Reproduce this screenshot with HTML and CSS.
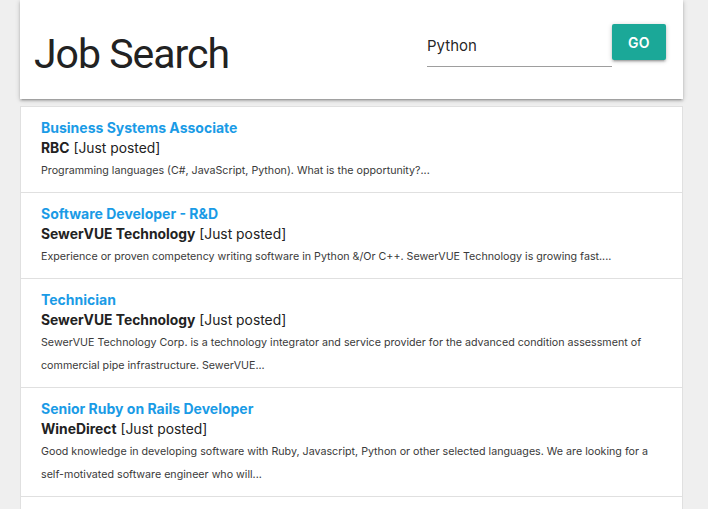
FILE: index.html
```html
<!DOCTYPE html>
<html>
<head>
<meta charset="utf-8">
<link rel="stylesheet" href="styles.css">
</head>
<body>
<div class="page">
  <header class="card header">
    <h1 class="title">Job Search</h1>
    <form class="search">
      <input class="search-input" type="text" value="Python">
      <button class="btn" type="button">GO</button>
    </form>
  </header>
  <ul class="collection">
    <li class="item">
      <a class="job-title">Business Systems Associate</a>
      <div class="company"><b>RBC</b> [Just posted]</div>
      <p class="desc">Programming languages (C#, JavaScript, Python). What is the opportunity?...</p>
    </li>
    <li class="item">
      <a class="job-title">Software Developer - R&amp;D</a>
      <div class="company"><b>SewerVUE Technology</b> [Just posted]</div>
      <p class="desc">Experience or proven competency writing software in Python &amp;/Or C++. SewerVUE Technology is growing fast....</p>
    </li>
    <li class="item">
      <a class="job-title">Technician</a>
      <div class="company"><b>SewerVUE Technology</b> [Just posted]</div>
      <p class="desc">SewerVUE Technology Corp. is a technology integrator and service provider for the advanced condition assessment of commercial pipe infrastructure. SewerVUE...</p>
    </li>
    <li class="item">
      <a class="job-title">Senior Ruby on Rails Developer</a>
      <div class="company"><b>WineDirect</b> [Just posted]</div>
      <p class="desc">Good knowledge in developing software with Ruby, Javascript, Python or other selected languages. We are looking for a self-motivated software engineer who will...</p>
    </li>
  </ul>
</div>
</body>
</html>
```
FILE: styles.css
```css
* { box-sizing: border-box; }
html, body { margin: 0; padding: 0; }
body {
  background: #efefef;
  font-family: Inter, "Noto Sans", sans-serif;
  color: rgba(0,0,0,0.87);
  height: 509px;
  overflow: hidden;
}
.page {
  width: 663px;
  margin-left: 20px;
}
.card {
  background: #fff;
  box-shadow: 0 2px 2px 0 rgba(0,0,0,0.14), 0 3px 1px -2px rgba(0,0,0,0.12), 0 1px 5px 0 rgba(0,0,0,0.2);
}
.header {
  height: 99px;
  display: flex;
  align-items: flex-start;
  justify-content: space-between;
  padding: 0 17px 0 14px;
}
.title {
  margin: 28px 0 0 0;
  font-family: Roboto, sans-serif;
  font-weight: 400;
  font-size: 41px;
  letter-spacing: -1px;
  line-height: 52px;
  color: #222;
}
.search {
  display: flex;
  align-items: flex-start;
  margin-top: 24px;
}
.search-input {
  width: 185px;
  height: 43px;
  border: none;
  border-bottom: 1px solid #9e9e9e;
  outline: none;
  padding: 0;
  font-family: Inter, sans-serif;
  font-size: 15px;
  color: rgba(0,0,0,0.87);
  background: transparent;
}
.btn {
  width: 54px;
  height: 36px;
  border: none;
  border-radius: 2px;
  background: #1ba898;
  color: #fff;
  font-family: Inter, sans-serif;
  font-weight: 600;
  font-size: 14px;
  letter-spacing: 0.5px;
  box-shadow: 0 2px 2px 0 rgba(0,0,0,0.14), 0 3px 1px -2px rgba(0,0,0,0.12), 0 1px 5px 0 rgba(0,0,0,0.2);
  padding: 0;
}
.collection {
  list-style: none;
  margin: 7px 0 0 0;
  padding: 0 0 40px 0;
  background: #fff;
  border: 1px solid #e0e0e0;
}
.item {
  padding: 10px 20px;
  border-bottom: 1px solid #e0e0e0;
}
.job-title {
  display: block;
  color: #1a9be6;
  font-weight: 700;
  font-size: 14px;
  line-height: 21px;
}
.company {
  font-size: 13.85px;
  line-height: 21px;
  color: #222;
}
.company b { font-weight: 700; }
.desc {
  margin: 0;
  font-size: 10.7px;
  line-height: 23px;
  color: #3a3a3a;
}
```
